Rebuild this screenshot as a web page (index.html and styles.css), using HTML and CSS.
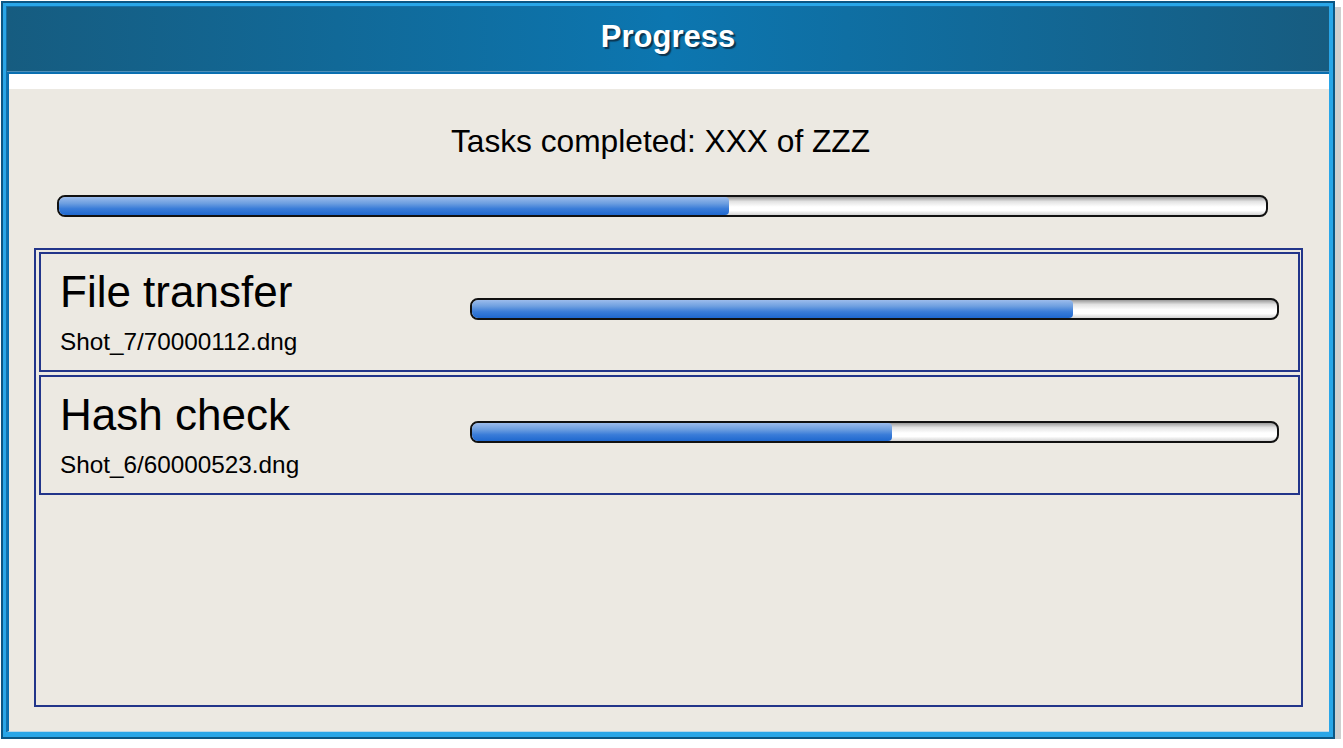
FILE: index.html
```html
<!DOCTYPE html>
<html>
<head>
<meta charset="utf-8">
<link rel="stylesheet" href="styles.css">
</head>
<body>
<div class="window">
  <div class="inner">
    <div class="header"><span class="title">Progress</span></div>
    <div class="content">
      <div class="strip"></div>
      <div class="body">
        <div class="summary">Tasks completed: XXX of ZZZ</div>
        <div class="bar main-bar"><div class="fill" style="width:55.5%"></div></div>
        <div class="list">
          <div class="item">
            <div class="labels">
              <div class="item-title">File transfer</div>
              <div class="item-file">Shot_7/70000112.dng</div>
            </div>
            <div class="bar item-bar"><div class="fill" style="width:74.6%"></div></div>
          </div>
          <div class="item">
            <div class="labels">
              <div class="item-title">Hash check</div>
              <div class="item-file">Shot_6/60000523.dng</div>
            </div>
            <div class="bar item-bar"><div class="fill" style="width:52.2%"></div></div>
          </div>
        </div>
      </div>
    </div>
  </div>
</div>
</body>
</html>
```

FILE: styles.css
```css
html, body {
  margin: 0;
  padding: 0;
  background: #ffffff;
}
body {
  font-family: "Liberation Sans", Arial, sans-serif;
  padding: 1px 0 0 1px;
}
.window {
  box-sizing: border-box;
  width: 1334px;
  height: 738px;
  border: 2px solid #0b5684;
  box-shadow: 6px 6px 0 #cfcfcf;
  background: #29a6e8;
  padding: 3px 4px 5px 3px;
}
.inner {
  box-sizing: border-box;
  height: 100%;
  border-left: 1px solid #1470a8;
  border-top: 1px solid #1470a8;
  display: flex;
  flex-direction: column;
}
.header {
  height: 65px;
  box-sizing: border-box;
  padding-top: 14px;
  text-align: center;
  background: linear-gradient(to right, #165c80 0%, #0c76b0 50%, #175c80 100%);
  border-bottom: 1px solid #4f8fb8;
}
.title {
  color: #ffffff;
  font-weight: bold;
  font-size: 31px;
  line-height: 31px;
  text-shadow: 2px 2px 1px #0b3550;
}
.content {
  flex: 1;
  display: flex;
  flex-direction: column;
  border-top: 2px solid #0a6fb0;
  border-left: 2px solid #0a6fb0;
  border-bottom: 1px solid #b9d6e8;
}
.strip {
  height: 15px;
  background: #ffffff;
}
.body {
  flex: 1;
  background: #ece9e2;
  display: flex;
  flex-direction: column;
  padding: 37px 26px 24px 25px;
}
.summary {
  font-size: 31.7px;
  line-height: 32px;
  text-align: center;
  color: #000;
  padding-right: 16px;
  margin-top: -1px;
}
.bar {
  box-sizing: border-box;
  height: 22px;
  border: 2px solid #111;
  border-radius: 8px;
  background: linear-gradient(to bottom, #9a9a9a 0%, #e2e2e2 25%, #ffffff 55%, #ffffff 75%, #d4d4d4 100%);
  overflow: hidden;
}
.fill {
  height: 100%;
  border-radius: 0 4px 4px 0;
  background: linear-gradient(to bottom, #9cbcec 0%, #6e9fe0 35%, #3a7cd8 65%, #1f68cf 100%);
}
.main-bar {
  margin: 38px 35px 0 23px;
}
.list {
  flex: 1;
  margin-top: 31px;
  border: 2px solid #22358a;
  padding: 2px 1px 2px 3px;
  display: flex;
  flex-direction: column;
  gap: 3px;
}
.item {
  height: 120px;
  box-sizing: border-box;
  border: 2px solid #22358a;
  display: flex;
  align-items: flex-start;
  padding: 16px 19px 0 19px;
}
.labels {
  width: 410px;
  flex: none;
}
.item-title {
  font-size: 44px;
  line-height: 44px;
  color: #000;
}
.item-file {
  font-size: 24.3px;
  line-height: 24px;
  margin-top: 16px;
  color: #000;
}
.item-bar {
  flex: 1;
  margin-top: 28px;
  height: 22px;
}
```
